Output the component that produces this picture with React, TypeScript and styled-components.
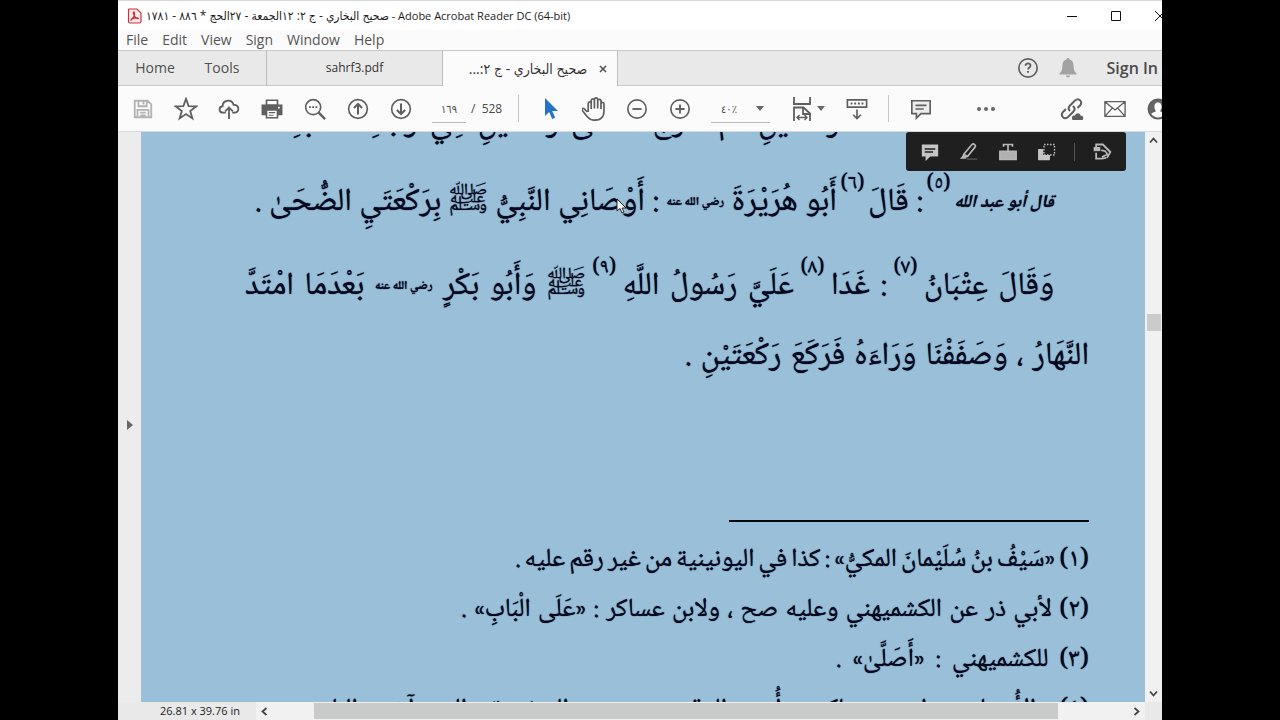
import React from 'react';
import styled, { createGlobalStyle } from 'styled-components';

const ui = '"Open Sans", "Noto Sans", "DejaVu Sans Condensed", "DejaVu Sans", sans-serif';
const naskh = '"Noto Naskh Arabic", "Amiri", "DejaVu Sans Condensed", "DejaVu Sans", sans-serif';

const Global = createGlobalStyle`
  *, *::before, *::after { box-sizing: border-box; }
  body { margin: 0; background: #000; font-family: ${ui}; overflow: hidden; }
  button, input, select { font: inherit; color: inherit; border: 0; padding: 0; margin: 0; background: none; }
`;

const Stage = styled.div`
  height: 100vh;
  padding: 0 118px;
  background: #000;
`;

const Window = styled.main`
  height: 100%;
  display: flex;
  flex-direction: column;
  overflow: hidden;
  background: #fbfbfb;
  color: #4a4a4a;
`;

const TitleBar = styled.header`
  flex: none;
  display: flex;
  align-items: center;
  height: 30px;
  padding-left: 9px;
  border-top: 1px solid #d8d8d8;
  background: #fff;
`;

const Title = styled.h1`
  margin: 0 0 0 4px;
  color: #1c1c1c;
  font-size: 11px;
  font-weight: 400;
  line-height: 20px;
  white-space: nowrap;
`;

const ArabicTitle = styled.bdi`
  font-size: 12px;
`;

const WindowButtons = styled.div`
  display: flex;
  margin: 0 -20px 0 auto;
`;

const WindowButton = styled.button`
  display: grid;
  place-items: center;
  width: 44px;
  height: 28px;
`;

const MenuBar = styled.nav`
  flex: none;
  display: flex;
  gap: 14px;
  height: 20px;
  padding-left: 8px;
`;

const MenuItem = styled.button`
  font-size: 14px;
  line-height: 20px;
  color: #555;
`;

const TabBar = styled.div`
  flex: none;
  display: flex;
  height: 36px;
  border-top: 1px solid #c9c9c9;
  background: #e9e9e9;
`;

const Tab = styled.button<{ $width: number; $active?: boolean; $large?: boolean; $edge?: boolean }>`
  display: flex;
  align-items: center;
  justify-content: center;
  gap: 12px;
  width: ${p => p.$width}px;
  padding-left: ${p => (p.$active ? 16 : 0)}px;
  padding-right: ${p => (p.$large && p.$edge ? 14 : 0)}px;
  font-size: ${p => (p.$large || p.$active ? 14 : 12)}px;
  line-height: 20px;
  color: ${p => (p.$large ? '#4f4f4f' : '#333')};
  background: ${p => (p.$active ? '#fbfbfb' : 'transparent')};
  border-right: ${p => (p.$edge ? '1px solid #bdbdbd' : '0')};
  border-bottom: ${p => (p.$active ? '0' : '1px solid #c9c9c9')};
`;

const Account = styled.div`
  flex: 1;
  display: flex;
  align-items: center;
  justify-content: flex-end;
  gap: 20px;
  padding-right: 4px;
  border-bottom: 1px solid #c9c9c9;
`;

const PlainButton = styled.button`
  display: grid;
  place-items: center;
`;

const SignIn = styled.button`
  margin-left: 10px;
  font-size: 16px;
  font-weight: 600;
  line-height: 20px;
  white-space: nowrap;
`;

const Toolbar = styled.div`
  flex: none;
  display: flex;
  align-items: center;
  height: 46px;
  padding-left: 3px;
  border-bottom: 1px solid #d4dadd;
`;

const Tool = styled.button`
  flex: none;
  display: grid;
  place-items: center;
  width: 43px;
  height: 40px;
`;

const FitTool = styled(Tool)`
  display: flex;
  align-items: center;
  justify-content: center;
  gap: 3px;
  margin: 0 6px 0 16px;
`;

const MoreTool = styled(Tool)`
  margin-left: 22px;
`;

const PageInput = styled.input`
  width: 34px;
  height: 28px;
  margin-left: 10px;
  text-align: center;
  font-size: 11px;
  border-bottom: 1px solid #bcbcbc;
`;

const PageTotal = styled.span`
  width: 42px;
  padding-left: 5px;
  font-size: 12px;
  white-space: pre;
`;

const Separator = styled.span`
  flex: none;
  width: 1px;
  height: 27px;
  margin: 0 10px;
  background: #c4c4c4;
`;

const ZoomBox = styled.label`
  display: flex;
  align-items: center;
  width: 59px;
  height: 28px;
  margin-left: 10px;
  border-bottom: 1px solid #bcbcbc;
`;

const ZoomSelect = styled.select`
  appearance: none;
  width: 45px;
  padding-left: 10px;
  font-size: 11px;
`;

const ShareTools = styled.div`
  display: flex;
  margin: 0 -17px 0 auto;
`;

const Workspace = styled.div`
  flex: 1;
  display: flex;
  min-height: 0;
`;

const SideRail = styled.button`
  flex: none;
  width: 23px;
  padding-top: 14px;
  background: #ececec;
`;

const Page = styled.article`
  position: relative;
  flex: 1;
  overflow: hidden;
  padding: 0 56px 0 0;
  background: #9ac0d9;
  color: #03081f;
  font-family: ${naskh};
  text-shadow: 0 0 1px #03081f;
`;

const Clip = styled.div`
  display: flex;
  align-items: flex-end;
  height: 12px;
  margin-bottom: 17px;
`;

const Line = styled.p<{ $width: number; $height: number; $indent?: number }>`
  flex: none;
  display: flex;
  align-items: center;
  justify-content: space-between;
  width: ${p => p.$width}px;
  height: ${p => p.$height}px;
  margin: 0 ${p => p.$indent ?? 0}px 0 0;
  font-size: 32px;
  line-height: 40px;
  white-space: nowrap;
`;

const Note = styled(Line)`
  font-size: 26px;
`;

const Ref = styled.sup`
  font-size: 21px;
  line-height: 20px;
  align-self: flex-start;
  margin: 14px -4px 0;
`;

const Script = styled.em`
  font-size: 18px;
  font-weight: 700;
`;

const Honorific = styled.span`
  font-size: 12px;
  font-weight: 700;
  line-height: 20px;
`;

const Rule = styled.hr`
  width: 360px;
  height: 2px;
  margin: 135px 0 13px;
  border: 0;
  background: #05070f;
`;

const QuickTools = styled.div`
  position: absolute;
  top: 0;
  right: 19px;
  display: flex;
  align-items: center;
  width: 220px;
  height: 39px;
  padding-left: 4px;
  border-radius: 3px;
  background: #1f1f1f;
`;

const QuickTool = styled.button`
  display: grid;
  place-items: center;
  width: 39px;
  height: 39px;
`;

const QuickDivider = styled.span`
  width: 1px;
  height: 18px;
  margin: 0 7px 0 8px;
  background: #555;
`;

const Pointer = styled.svg`
  position: absolute;
  left: 475px;
  top: 66px;
`;

const VScroll = styled.div`
  flex: none;
  display: flex;
  flex-direction: column;
  align-items: center;
  width: 17px;
  padding: 4px 1px 4px 0;
  background: #f1f1f1;
`;

const VThumb = styled.div`
  width: 14px;
  height: 17px;
  margin: 169px 0 auto 2px;
  background: #cbcbcb;
`;

const StatusBar = styled.footer`
  flex: none;
  display: flex;
  height: 18px;
  background: #e9e9e9;
`;

const Size = styled.span`
  width: 138px;
  padding-left: 42px;
  color: #222;
  font-size: 11px;
  line-height: 18px;
  white-space: nowrap;
`;

const HScroll = styled.div`
  flex: 1;
  display: flex;
  align-items: center;
  justify-content: space-between;
  margin-right: 17px;
  padding: 0 4px;
  background: #f1f1f1;
`;

const HThumb = styled.div`
  flex: 1;
  height: 16px;
  margin: 0 74px 0 45px;
  background: #c8cbca;
`;

const Icon = ({ size = 22, color = '#5f5f5f', width = 1.8, children }: {
  size?: number; color?: string; width?: number; children: React.ReactNode;
}) => (
  <svg width={size} height={size} viewBox="0 0 24 24" fill="none" stroke={color} strokeWidth={width} aria-hidden="true">
    {children}
  </svg>
);

const Chevron = ({ d }: { d: string }) => (
  <svg width="9" height="9" viewBox="0 0 9 9" fill="none" stroke="#444" strokeWidth="1.8" aria-hidden="true">
    <path d={d} />
  </svg>
);

const Caret = () => (
  <svg width="8" height="5" viewBox="0 0 8 5" fill="#666" aria-hidden="true"><path d="M0 0h8L4 5z" /></svg>
);

const Words = ({ text }: { text: string }) => (
  <>{text.split(' ').map((word, i) => <span key={i}>{word}</span>)}</>
);

export default function App() {
  return (
    <Stage>
      <Global />
      <Window>
        <TitleBar>
          <svg width="15" height="16" viewBox="0 0 15 16" fill="none" stroke="#c8323c" aria-hidden="true">
            <path d="M2 1h8l4 4v8.500q0 1.500-1.500 1.500H3q-1.500 0-1.500-1.500V1.500z" fill="#fbeaea" strokeWidth="1.200" />
            <path d="M4 11.500c3-2 4-5 3.200-7.300-.7-.8-1.300.8-.3 2.800 1 2.200 2.600 3.800 4.300 3.600 1.400-.5-2.500-1.300-6 .2-1.300.8-1.700 1.600-.7 1.200" strokeWidth="1.300" />
          </svg>
          <Title>
            <ArabicTitle>صحيح البخاري - ج ٢: ١٢الجمعة - ٢٧الحج * ٨٨٦ - ١٧٨١</ArabicTitle>
            {' - Adobe Acrobat Reader DC (64-bit)'}
          </Title>
          <WindowButtons>
            <WindowButton aria-label="Minimize"><svg width="10" height="10"><path d="M0 5.500h10" stroke="#111" /></svg></WindowButton>
            <WindowButton aria-label="Maximize"><svg width="10" height="10"><path d="M.5.5h9v9h-9z" fill="none" stroke="#111" /></svg></WindowButton>
            <WindowButton aria-label="Close"><svg width="10" height="10"><path d="M0 0l10 10M10 0L0 10" stroke="#111" /></svg></WindowButton>
          </WindowButtons>
        </TitleBar>

        <MenuBar>
          {['File', 'Edit', 'View', 'Sign', 'Window', 'Help'].map(m => <MenuItem key={m}>{m}</MenuItem>)}
        </MenuBar>

        <TabBar>
          <Tab $width={74} $large>Home</Tab>
          <Tab $width={75} $large $edge>Tools</Tab>
          <Tab $width={176} $edge>sahrf3.pdf</Tab>
          <Tab $width={175} $active $edge>
            <bdi dir="rtl">صحيح البخاري - ج ٢:...</bdi>
            <svg width="8" height="8" viewBox="0 0 8 8"><path d="M1 1l6 6M7 1L1 7" stroke="#555" strokeWidth="1.600" /></svg>
          </Tab>
          <Account>
            <PlainButton aria-label="Help">
              <Icon size={22}>
                <circle cx="12" cy="12" r="10" />
                <path d="M9.300 9.500c0-3.500 5.600-3.300 5.400 0-.1 1.900-2.600 2-2.600 4.200M12.100 15.300v2" strokeWidth="2" />
              </Icon>
            </PlainButton>
            <PlainButton aria-label="Notifications">
              <svg width="18" height="20" viewBox="0 0 18 20" fill="#a3a3a3" aria-hidden="true">
                <path d="M9 0c1 0 1.500.6 1.500 1.600 3 .8 4 3 4.100 6 .1 4.400.8 5.900 2.900 7.900v1H.5v-1c2.100-2 2.800-3.500 2.900-7.900.1-3 1.100-5.200 4.100-6C7.500.6 8 0 9 0zM6.800 17.500h4.400c-.4 2.500-4 2.500-4.400 0z" />
              </svg>
            </PlainButton>
            <SignIn>Sign In</SignIn>
          </Account>
        </TabBar>

        <Toolbar>
          <Tool aria-label="Save"><Icon color="#b3b3b3" width={2}><path d="M3 3h14l4 4v14H3zM7 3v6h9V3M12.500 4v3M6 21v-8h12v8M9 16h6M9 19h6" /></Icon></Tool>
          <Tool aria-label="Star"><Icon size={24}><path d="M12 1.800l2.600 7.300 7.700.2-6.100 4.700 2.200 7.400-6.400-4.300-6.400 4.300 2.200-7.400-6.100-4.700 7.700-.2z" /></Icon></Tool>
          <Tool aria-label="Upload"><Icon width={2}><path d="M8.500 16H6C.5 16 .5 9.500 5 9 5 2 15 .5 17 7.500c6.500-.5 7 8.500 1 8.500h-2.500M12 23V10.500M7.800 14.500L12 10.300l4.200 4.200" /></Icon></Tool>
          <Tool aria-label="Print"><Icon><path d="M6 2.500h12V8H6z" fill="#fff" /><path d="M1.500 8h21v10h-21z" fill="#5f5f5f" /><path d="M6 13h12v8.500H6z" fill="#fff" /><path d="M8.500 16h7M8.500 18.800h5" strokeWidth="1.300" /><path d="M18.500 10.500h2" stroke="#fff" /></Icon></Tool>
          <Tool aria-label="Find"><Icon><circle cx="10" cy="10" r="8.200" /><path d="M16 16l7 7" strokeWidth="2.600" /><path d="M5.500 10h2M9 10h2M12.500 10h2" strokeWidth="2" /></Icon></Tool>
          <Tool aria-label="Previous page"><Icon><circle cx="12" cy="12" r="10.200" /><path d="M12 18V6.500M7.500 11L12 6.500l4.500 4.500" strokeWidth="2.200" /></Icon></Tool>
          <Tool aria-label="Next page"><Icon><circle cx="12" cy="12" r="10.200" /><path d="M12 6v11.500M7.500 13l4.500 4.500 4.500-4.500" strokeWidth="2.200" /></Icon></Tool>
          <PageInput aria-label="Page number" defaultValue="١٦٩" />
          <PageTotal>{'/  528'}</PageTotal>
          <Separator />
          <Tool aria-label="Select">
            <svg width="14" height="22" viewBox="0 0 14 22" fill="#2473c8" aria-hidden="true"><path d="M1 0v18l4.200-4 3 7 3-1.300-3-6.700H14z" /></svg>
          </Tool>
          <Tool aria-label="Pan"><Icon size={24} width={1.7}><path d="M5.500 15L2.200 11.800c-1.500-1.300-3 .4-1.900 1.700L5.500 20c2 2.500 4 3.200 7 3.200 6.500 0 9.500-3 9.500-9V7c0-2.200-3-2.200-3 0v5V4c0-2.200-3.300-2.200-3.300 0v7.500V2.600c0-2.200-3.300-2.200-3.300 0v8.900V3.600c0-2.200-3.200-2.200-3.200 0V12 6.500c0-2.200-3-2.200-3 0V15" /></Icon></Tool>
          <Tool aria-label="Zoom out"><Icon><circle cx="12" cy="12" r="10" /><path d="M7 12h10" strokeWidth="2" /></Icon></Tool>
          <Tool aria-label="Zoom in"><Icon><circle cx="12" cy="12" r="10" /><path d="M7 12h10M12 7v10" strokeWidth="2" /></Icon></Tool>
          <ZoomBox>
            <ZoomSelect aria-label="Zoom level" defaultValue="40"><option value="40">٤٠٪</option></ZoomSelect>
            <Caret />
          </ZoomBox>
          <FitTool aria-label="Fit page"><Icon size={24}><path d="M4 0v7h16V0M4 24V10.500h9.500l6.500 6V24M13 10.500v6.500h7" /><path d="M7 20.500h10M9.500 18L7 20.500 9.500 23M14.500 18l2.500 2.500-2.500 2.500" strokeWidth="1.400" /></Icon><Caret /></FitTool>
          <Tool aria-label="Read mode"><Icon><path d="M1.500 2h21v8h-21zM12 12.500v10M7.800 18.300l4.200 4.200 4.200-4.200" /><path d="M5 6h14" strokeWidth="2" strokeDasharray="2 2" /></Icon></Tool>
          <Separator />
          <Tool aria-label="Comment"><Icon><path d="M2 3h20v14H12l-5 5v-5H2z" fill="#ececec" /><path d="M6 8h12M6 12h9" /></Icon></Tool>
          <MoreTool aria-label="More tools"><svg width="18" height="4" fill="#666"><circle cx="2" cy="2" r="2" /><circle cx="9" cy="2" r="2" /><circle cx="16" cy="2" r="2" /></svg></MoreTool>
          <ShareTools>
            <Tool aria-label="Share link"><Icon size={24} width={2}><path d="M10 14c-2-2-1.500-4 0-5.500l5-5c4-3.500 8 1.500 5 5L17.500 11M13 9c2 2 2 4 .5 5.500l-5.500 5.500c-4 3.500-8-1.500-5-5L6 12" /><path d="M12.500 23c-1.500-3 0-5 2.500-4.500 1-3 5-3 5.500 0 3 0 3.500 3 2 4.500z" fill="#5f5f5f" stroke="none" /></Icon></Tool>
            <Tool aria-label="Email"><Icon><path d="M1 4h22v16H1zM1 4l11 9L23 4M1 20l8-9M23 20l-8-9" strokeWidth="1.500" /></Icon></Tool>
            <Tool aria-label="Account"><Icon><circle cx="12" cy="12" r="10.500" fill="#666" /><path d="M12 5c5 0 4.500 7 2.300 9 .2 1.800 4 1.500 5 3.500-3.500 5-11 5-14.600 0 1-2 4.800-1.700 5-3.500C7.500 12 7 5 12 5z" fill="#fff" stroke="none" /></Icon></Tool>
          </ShareTools>
        </Toolbar>

        <Workspace>
          <SideRail aria-label="Open navigation pane"><svg width="6" height="10" fill="#666"><path d="M0 0l6 5-6 5z" /></svg></SideRail>
          <Page dir="rtl" lang="ar">
            <Clip>
              <Line $width={550} $height={40} $indent={250}><Words text="رَكْعَتَيْنِ ثُمَّ خَرَجَ فَصَلَّى رَكْعَتَيْنِ فِي وَجْهِ الْكَعْبَةِ" /></Line>
            </Clip>
            <Line $width={799} $height={84} $indent={35}>
              <Script>قال أبو عبد الله</Script><Ref>(٥)</Ref>
              <Words text=": قَالَ" /><Ref>(٦)</Ref>
              <Words text="أَبُو هُرَيْرَةَ" />
              <Honorific>رضي الله عنه</Honorific>
              <Words text=": أَوْصَانِي النَّبِيُّ ﷺ بِرَكْعَتَيِ الضُّحَىٰ ." />
            </Line>
            <Line $width={809} $height={84} $indent={35}>
              <Words text="وَقَالَ عِتْبَانُ" /><Ref>(٧)</Ref>
              <Words text=": غَدَا" /><Ref>(٨)</Ref>
              <Words text="عَلَيَّ رَسُولُ اللَّهِ" /><Ref>(٩)</Ref>
              <Words text="ﷺ وَأَبُو بَكْرٍ" />
              <Honorific>رضي الله عنه</Honorific>
              <Words text="بَعْدَمَا امْتَدَّ" />
            </Line>
            <Line $width={404} $height={56}><Words text="النَّهَارُ ، وَصَفَفْنَا وَرَاءَهُ فَرَكَعَ رَكْعَتَيْنِ ." /></Line>
            <Rule />
            <Note $width={574} $height={50}><Words text="(١) «سَيْفُ بنُ سُلَيْمانَ المكيُّ» : كذا في اليونينية من غير رقم عليه ." /></Note>
            <Note $width={628} $height={50}><Words text="(٢) لأبي ذر عن الكشميهني وعليه صح ، ولابن عساكر : «عَلَى الْبَابِ» ." /></Note>
            <Note $width={253} $height={50}><Words text="(٣) للكشميهني : «أَصَلَّىٰ» ." /></Note>
            <Note $width={806} $height={50}><Words text="(٤) الأُصيلي وابن عساكر وأُبي الوقت : من اليونينية إلى آخر الباب ." /></Note>
            <Pointer width="11" height="16" viewBox="0 0 11 16"><path d="M1 1v12l3-2.500 2 4.500 2-1-2-4h4z" fill="#fff" stroke="#222" /></Pointer>
            <QuickTools dir="ltr">
              <QuickTool aria-label="Add comment"><Icon size={18} color="#c4c4c4"><path d="M2 3h20v14H12l-5 5v-5H2z" fill="#c4c4c4" /><path d="M5 8h14M5 12h11" stroke="#1f1f1f" /></Icon></QuickTool>
              <QuickTool aria-label="Highlight"><Icon size={18} color="#b8b8b8"><path d="M5 15L16 2c2-2 6 1 4 3.500L10 18l-6 1zM5 15l5 3" strokeWidth="2.200" /><path d="M2 20l3-3 2 3z" fill="#b8b8b8" /><path d="M9 21.500h14" stroke="#555" /></Icon></QuickTool>
              <QuickTool aria-label="Highlight text"><Icon size={18} color="#b8b8b8"><path d="M1 11h22v11H1z" fill="#b0b0b0" /><path d="M6 5V2h12v3M12 2v9" strokeWidth="2.200" /></Icon></QuickTool>
              <QuickTool aria-label="Copy area"><Icon size={18} color="#c4c4c4"><path d="M1 9h5v8h9v5H1z" fill="#c4c4c4" /><path d="M8 2h14v14H8z" strokeDasharray="2 2" /></Icon></QuickTool>
              <QuickDivider />
              <QuickTool aria-label="Fill and sign"><Icon size={20} color="#b8b8b8" width={2.2}><path d="M5 7V3h8l9 9-4 7M5 13v7h7l5-1M11 10c4 0 7 2 7 5l-6 3" /><path d="M2 6h8v5H2z" fill="#b8b8b8" stroke="none" /></Icon></QuickTool>
            </QuickTools>
          </Page>
          <VScroll>
            <Chevron d="M1 6.500l3.500-4 3.500 4" />
            <VThumb />
            <Chevron d="M1 2.500l3.500 4 3.500-4" />
          </VScroll>
        </Workspace>

        <StatusBar>
          <Size>26.81 x 39.76 in</Size>
          <HScroll>
            <Chevron d="M6.500 1l-4 3.500 4 3.500" />
            <HThumb />
            <Chevron d="M2.500 1l4 3.500-4 3.500" />
          </HScroll>
        </StatusBar>
      </Window>
    </Stage>
  );
}
